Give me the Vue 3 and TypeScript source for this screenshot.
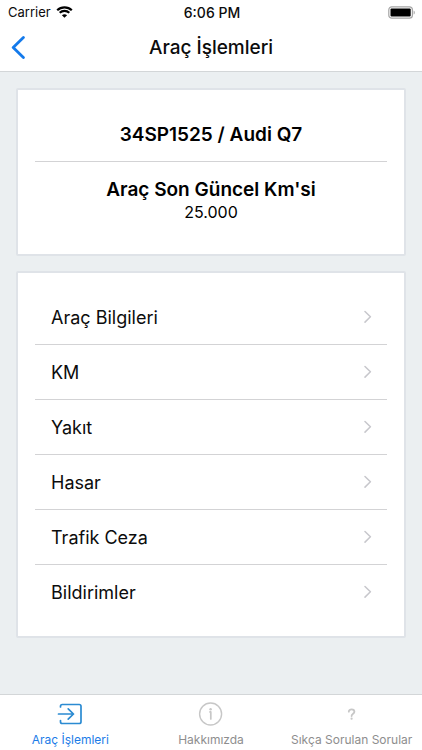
<script setup lang="ts">
import { ref } from 'vue'

interface MenuItem {
  id: string
  label: string
}

interface Tab {
  id: string
  label: string
}

const items: MenuItem[] = [
  { id: 'bilgiler', label: 'Araç Bilgileri' },
  { id: 'km', label: 'KM' },
  { id: 'yakit', label: 'Yakıt' },
  { id: 'hasar', label: 'Hasar' },
  { id: 'ceza', label: 'Trafik Ceza' },
  { id: 'bildirim', label: 'Bildirimler' },
]

const tabs: Tab[] = [
  { id: 'islemler', label: 'Araç İşlemleri' },
  { id: 'hakkimizda', label: 'Hakkımızda' },
  { id: 'sss', label: 'Sıkça Sorulan Sorular' },
]

const activeTab = ref<string>('islemler')
</script>

<template>
  <div class="screen">
    <div class="status">
      <div class="carrier">
        <span>Carrier</span>
        <svg class="wifi" viewBox="0 0 17 12" aria-hidden="true">
          <path d="M1.2 4.3C5.2 .5 11.8 .5 15.8 4.3" />
          <path d="M3.7 6.8C6.4 4.3 10.6 4.3 13.3 6.8" />
          <path class="solid" d="M8.5 11.8L5.9 9.2C7.3 7.9 9.7 7.9 11.1 9.2Z" />
        </svg>
      </div>
      <time class="clock">6:06 PM</time>
      <svg class="battery" viewBox="0 0 28 13" aria-hidden="true">
        <rect class="shell" x="0.8" y="0.8" width="23.6" height="11.4" rx="3" />
        <rect x="2.5" y="2.5" width="20.2" height="8" rx="1" />
        <path class="cap" d="M25.6 4.4C27.2 5 27.2 8 25.6 8.6Z" />
      </svg>
    </div>

    <header class="navbar">
      <button class="back" type="button" aria-label="Geri">
        <svg viewBox="0 0 14 24" aria-hidden="true"><path d="M12.4 1.5L2.2 11.5L12.4 21.5" /></svg>
      </button>
      <h1>Araç İşlemleri</h1>
    </header>

    <main class="content">
      <section class="card summary">
        <h2 class="vehicle">34SP1525 / Audi Q7</h2>
        <div class="reading">
          <h3>Araç Son Güncel Km'si</h3>
          <p>25.000</p>
        </div>
      </section>

      <nav class="card">
        <ul class="menu">
          <li v-for="item in items" :key="item.id">
            <a :href="'#' + item.id">
              <span>{{ item.label }}</span>
              <svg class="chevron" viewBox="0 0 8 14" aria-hidden="true"><path d="M1 1.5L6.4 6.8L1 12.1" /></svg>
            </a>
          </li>
        </ul>
      </nav>
    </main>

    <nav class="tabbar">
      <button
        v-for="tab in tabs"
        :key="tab.id"
        type="button"
        class="tab"
        :class="{ active: tab.id === activeTab }"
        @click="activeTab = tab.id"
      >
        <svg v-if="tab.id === 'islemler'" class="icon" viewBox="0 0 26 26" aria-hidden="true">
          <path d="M3.5 6V5.3Q3.5 3.5 5.3 3.5H22.2Q24 3.5 24 5.3V20.7Q24 22.5 22.2 22.5H5.3Q3.5 22.5 3.5 20.7V19.5" />
          <path d="M1.5 13H16.5M11.2 7.8L16.5 13L11.2 18.2" />
        </svg>
        <svg v-else-if="tab.id === 'hakkimizda'" class="icon" viewBox="0 0 26 26" aria-hidden="true">
          <circle cx="12.6" cy="13" r="11" />
          <path class="stem" d="M12 10.9H12.8V18" />
          <circle class="dot" cx="12.6" cy="8.2" r="1.2" />
        </svg>
        <svg v-else class="icon question" viewBox="0 0 26 26" aria-hidden="true">
          <path d="M9.8 10.7C9.8 7.6 15.4 7.6 15.4 10.8C15.4 12.9 12.6 12.8 12.6 15.1" />
          <circle class="dot" cx="12.6" cy="17.7" r="1.1" />
        </svg>
        <span>{{ tab.label }}</span>
      </button>
    </nav>
  </div>
</template>

<style>
body {
  margin: 0;
  background: #ebeff1;
}
</style>

<style scoped>
.screen {
  display: flex;
  flex-direction: column;
  min-height: 100vh;
  background: #ebeff1;
  color: #0c0c0c;
  font-family: Inter, "Liberation Sans", sans-serif;
}

h1,
h2,
h3,
p,
ul {
  margin: 0;
  padding: 0;
}

button {
  padding: 0;
  border: 0;
  background: none;
  font: inherit;
  cursor: pointer;
}

svg {
  display: block;
  fill: none;
  stroke-linecap: round;
  stroke-linejoin: round;
}

.status {
  display: grid;
  grid-template-columns: 1fr auto 1fr;
  align-items: center;
  height: 24px;
  padding: 0 6px 0 8px;
  background: #fff;
  font-size: 13px;
}

.carrier {
  display: flex;
  align-items: center;
  gap: 5px;
}

.wifi {
  width: 17px;
  height: 12px;
  stroke: #000;
  stroke-width: 2.2;
  stroke-linecap: butt;
}

.wifi .solid {
  fill: #000;
  stroke: none;
}

.clock {
  font-size: 14px;
  font-weight: 500;
}

.battery {
  justify-self: end;
  width: 28px;
  height: 13px;
  fill: #000;
}

.battery .shell {
  fill: none;
  stroke: #a5a5a5;
  stroke-width: 1.2;
}

.battery .cap {
  fill: #a5a5a5;
}

.navbar {
  display: grid;
  grid-template-columns: 1fr auto 1fr;
  align-items: center;
  height: 47px;
  padding: 0 11px;
  border-bottom: 1px solid #d3d6d8;
  background: #fff;
}

.back {
  justify-self: start;
}

.back svg {
  width: 14px;
  height: 24px;
  stroke: #147aeb;
  stroke-width: 2.8;
}

.navbar h1 {
  font-size: 19px;
  font-weight: 500;
  line-height: 24px;
}

.content {
  display: flex;
  flex: 1;
  flex-direction: column;
  gap: 15px;
  padding: 16px;
}

.card {
  padding: 17px;
  border: 2px solid #dfe3e8;
  border-radius: 2px;
  background: #fff;
}

.summary {
  padding-bottom: 32px;
  color: #000;
  text-align: center;
}

.vehicle {
  padding: 16px 0 14px;
  border-bottom: 1px solid #d3d3d5;
  font-size: 19px;
  font-weight: 600;
  line-height: 24px;
}

.reading {
  padding-top: 16px;
}

.reading h3 {
  font-size: 19px;
  font-weight: 600;
  line-height: 24px;
}

.reading p {
  font-size: 16px;
  line-height: 20px;
}

.menu {
  list-style: none;
}

.menu li + li {
  border-top: 1px solid #d3d3d5;
}

.menu a {
  display: flex;
  align-items: center;
  justify-content: space-between;
  height: 54px;
  padding: 0 15px 0 16px;
  color: inherit;
  font-size: 18px;
  text-decoration: none;
}

.chevron {
  width: 8px;
  height: 14px;
  stroke: #c7c7cc;
  stroke-width: 1.5;
}

.tabbar {
  display: grid;
  grid-template-columns: repeat(3, 1fr);
  height: 55px;
  border-top: 1px solid #d3d6d8;
  background: #fff;
}

.tab {
  display: flex;
  flex-direction: column;
  align-items: center;
  gap: 5px;
  padding-top: 6px;
  color: #8e8e8e;
  font-size: 12px;
  line-height: 16px;
  white-space: nowrap;
}

.tab.active {
  color: #1b7ce8;
}

.icon {
  width: 26px;
  height: 26px;
  stroke: #c7c7c7;
  stroke-width: 1.4;
}

.active .icon {
  stroke: #2b8bd2;
  stroke-width: 1.7;
}

.icon .stem {
  stroke-width: 1.7;
}

.question {
  stroke-width: 1.8;
}

.icon .dot {
  fill: #c7c7c7;
  stroke: none;
}

.active .dot {
  fill: #2b8bd2;
}
</style>
